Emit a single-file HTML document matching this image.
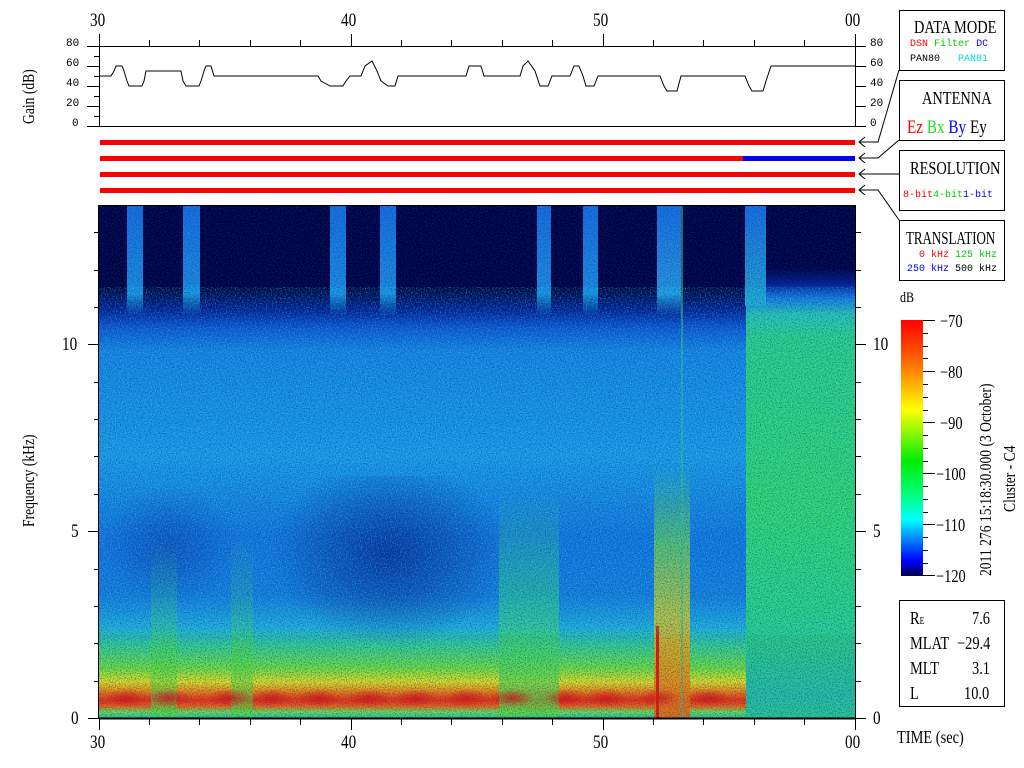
<!DOCTYPE html>
<html><head><meta charset="utf-8"><style>
*{margin:0;padding:0;box-sizing:border-box}
body{width:1024px;height:768px;background:#fff;position:relative;overflow:hidden;font-family:"Liberation Serif",serif;color:#000}
.a{position:absolute}
.t{position:absolute;font-size:17px;transform:scaleX(.8);transform-origin:left top;white-space:nowrap}
.m{position:absolute;font-family:"Liberation Mono",monospace;font-size:11px;white-space:nowrap}
.box{position:absolute;border:1px solid #000;background:#fff}
.rl{position:absolute;left:100px;width:755px;height:5px;background:#f00}
</style></head><body>

<div class="t" style="left:90px;top:10px;font-size:19px">30</div>
<div class="t" style="left:341px;top:10px;font-size:19px">40</div>
<div class="t" style="left:593px;top:10px;font-size:19px">50</div>
<div class="t" style="left:845px;top:10px;font-size:19px">00</div>
<div class="t" style="left:90px;top:732px;font-size:19px">30</div>
<div class="t" style="left:341px;top:732px;font-size:19px">40</div>
<div class="t" style="left:593px;top:732px;font-size:19px">50</div>
<div class="t" style="left:845px;top:732px;font-size:19px">00</div>

<div class="t" style="left:19px;top:124px;transform:rotate(-90deg) scaleX(.8);transform-origin:left top">Gain (dB)</div>
<div class="m" style="left:66px;top:38px">80</div>
<div class="m" style="left:66px;top:58px">60</div>
<div class="m" style="left:66px;top:78px">40</div>
<div class="m" style="left:66px;top:98px">20</div>
<div class="m" style="left:72px;top:118px">0</div>
<div class="m" style="left:870px;top:38px">80</div>
<div class="m" style="left:870px;top:58px">60</div>
<div class="m" style="left:870px;top:78px">40</div>
<div class="m" style="left:870px;top:98px">20</div>
<div class="m" style="left:870px;top:118px">0</div>

<div class="t" style="left:19px;top:527px;transform:rotate(-90deg) scaleX(.8);transform-origin:left top">Frequency (kHz)</div>
<div class="t" style="left:62px;top:334px;font-size:19px">10</div>
<div class="t" style="left:71px;top:521px;font-size:19px">5</div>
<div class="t" style="left:71px;top:708px;font-size:19px">0</div>
<div class="t" style="left:873px;top:334px;font-size:19px">10</div>
<div class="t" style="left:873px;top:521px;font-size:19px">5</div>
<div class="t" style="left:873px;top:708px;font-size:19px">0</div>

<div class="rl" style="top:140px"></div>
<div class="rl" style="top:156px"></div>
<div class="a" style="left:743px;top:156px;width:112px;height:5px;background:#0000ff"></div>
<div class="rl" style="top:172px"></div>
<div class="rl" style="top:188px"></div>

<div class="a" style="left:99px;top:206px;width:756px;height:512px;overflow:hidden;background:linear-gradient(#00003e 0px,#00003e 85px,#0a1a90 105px,#1450d0 122px,#1c80e2 145px,#2298e4 250px,#1a70dc 330px,#1c78dc 390px,#28a8d8 420px,#38d090 440px,#70e040 462px,#e0e020 476px,#f08010 486px,#f03010 494px,#f06010 500px,#70e050 506px,#30c0a0 512px)">
  <div class="a" style="left:170px;top:270px;width:240px;height:170px;background:radial-gradient(ellipse at 50% 45%,rgba(10,20,120,.7),rgba(10,30,140,0) 70%)"></div>
  <div class="a" style="left:0px;top:280px;width:140px;height:120px;background:radial-gradient(ellipse,rgba(15,40,160,.5),rgba(15,40,160,0) 70%)"></div>
  <div class="a" style="left:52px;top:330px;width:26px;height:180px;background:linear-gradient(rgba(60,210,120,0),rgba(80,220,60,.6))"></div>
  <div class="a" style="left:132px;top:330px;width:22px;height:180px;background:linear-gradient(rgba(60,210,120,0),rgba(80,220,60,.6))"></div>
  <div class="a" style="left:400px;top:280px;width:60px;height:230px;background:linear-gradient(rgba(40,200,160,0),rgba(60,210,120,.6) 50%,rgba(90,220,60,.7))"></div>
  <div class="a" style="left:555px;top:260px;width:36px;height:252px;background:linear-gradient(rgba(50,200,120,0),rgba(120,220,60,.7) 30%,rgba(230,200,20,.85) 60%,rgba(240,100,10,.9))"></div>
  <div class="a" style="left:557px;top:420px;width:3px;height:92px;background:#e02010"></div>
  <div class="a" style="left:28px;top:0;width:16px;height:110px;background:linear-gradient(#1a70e0,#2090e0 80%,rgba(30,120,230,0))"></div>
  <div class="a" style="left:84px;top:0;width:17px;height:110px;background:linear-gradient(#1a70e0,#2090e0 80%,rgba(30,120,230,0))"></div>
  <div class="a" style="left:231px;top:0;width:16px;height:110px;background:linear-gradient(#1a70e0,#2090e0 80%,rgba(30,120,230,0))"></div>
  <div class="a" style="left:281px;top:0;width:16px;height:110px;background:linear-gradient(#1a70e0,#2090e0 80%,rgba(30,120,230,0))"></div>
  <div class="a" style="left:438px;top:0;width:14px;height:110px;background:linear-gradient(#1a70e0,#2090e0 80%,rgba(30,120,230,0))"></div>
  <div class="a" style="left:484px;top:0;width:15px;height:110px;background:linear-gradient(#1a70e0,#2090e0 80%,rgba(30,120,230,0))"></div>
  <div class="a" style="left:558px;top:0;width:24px;height:110px;background:linear-gradient(#1a70e0,#2a9ae0 80%,rgba(30,120,230,0))"></div>
  <div class="a" style="left:582px;top:0;width:2px;height:512px;background:#40c080;opacity:.6"></div>
  <div class="a" style="left:0;top:478px;width:650px;height:30px;background:
   radial-gradient(ellipse 22px 9px at 27px 14px,rgba(230,20,10,.8),rgba(230,20,10,0)),
   radial-gradient(ellipse 22px 9px at 70px 14px,rgba(230,20,10,.8),rgba(230,20,10,0)),
   radial-gradient(ellipse 22px 9px at 130px 14px,rgba(230,20,10,.8),rgba(230,20,10,0)),
   radial-gradient(ellipse 22px 9px at 173px 14px,rgba(230,20,10,.8),rgba(230,20,10,0)),
   radial-gradient(ellipse 22px 9px at 220px 14px,rgba(230,20,10,.8),rgba(230,20,10,0)),
   radial-gradient(ellipse 22px 9px at 270px 14px,rgba(230,20,10,.8),rgba(230,20,10,0)),
   radial-gradient(ellipse 22px 9px at 317px 14px,rgba(230,20,10,.8),rgba(230,20,10,0)),
   radial-gradient(ellipse 22px 9px at 367px 14px,rgba(230,20,10,.8),rgba(230,20,10,0)),
   radial-gradient(ellipse 22px 9px at 413px 14px,rgba(230,20,10,.8),rgba(230,20,10,0)),
   radial-gradient(ellipse 22px 9px at 467px 14px,rgba(230,20,10,.8),rgba(230,20,10,0)),
   radial-gradient(ellipse 22px 9px at 507px 14px,rgba(230,20,10,.8),rgba(230,20,10,0)),
   radial-gradient(ellipse 22px 9px at 560px 14px,rgba(230,20,10,.8),rgba(230,20,10,0)),
   radial-gradient(ellipse 22px 9px at 610px 14px,rgba(230,20,10,.8),rgba(230,20,10,0))"></div>
  <div class="a" style="left:647px;top:0;width:109px;height:512px;background:linear-gradient(#00003e 0,#00003e 62px,#0a1a90 78px,#1e70e0 92px,#30c0b0 108px,#34d080 130px,#3ad864 300px,#30d080 420px,#28c0a0 490px,#30c890 512px)"></div>
  <div class="a" style="left:646px;top:0;width:21px;height:100px;background:linear-gradient(#1a70e0,#28a8d0)"></div>
  <svg class="a" style="left:0;top:0;opacity:.55" width="756" height="512"><filter id="n"><feTurbulence type="fractalNoise" baseFrequency="0.8" numOctaves="1" seed="3"/><feColorMatrix values="0 0 0 0 0  0 0 0 0 0.05  0 0 0 0 0.35  0 0 0 -3 1.7"/></filter><rect width="756" height="512" filter="url(#n)"/></svg>
  <svg class="a" style="left:0;top:0;opacity:.45" width="756" height="512"><filter id="n2"><feTurbulence type="fractalNoise" baseFrequency="0.8" numOctaves="1" seed="9"/><feColorMatrix values="0 0 0 0 0  0 0 0 0 1  0 0 0 0 1  0 0 0 -3 1.6"/></filter><rect width="756" height="290" y="110" filter="url(#n2)"/></svg>
</div>

<svg class="a" style="left:0;top:0" width="1024" height="768">
 <g stroke="#000" stroke-width="1" fill="none">
  <rect x="99.5" y="46.5" width="756" height="80"/>
  <line x1="87" y1="46.5" x2="99" y2="46.5"/><line x1="87" y1="66.5" x2="99" y2="66.5"/><line x1="87" y1="86.5" x2="99" y2="86.5"/><line x1="87" y1="106.5" x2="99" y2="106.5"/><line x1="87" y1="126.5" x2="99" y2="126.5"/>
  <line x1="94" y1="56.5" x2="99" y2="56.5"/><line x1="94" y1="76.5" x2="99" y2="76.5"/><line x1="94" y1="96.5" x2="99" y2="96.5"/><line x1="94" y1="116.5" x2="99" y2="116.5"/>
  <line x1="856" y1="46.5" x2="866" y2="46.5"/><line x1="856" y1="66.5" x2="866" y2="66.5"/><line x1="856" y1="86.5" x2="866" y2="86.5"/><line x1="856" y1="106.5" x2="866" y2="106.5"/><line x1="856" y1="126.5" x2="866" y2="126.5"/>
  <rect x="98.5" y="205.5" width="757" height="513"/>
  <line x1="99" y1="718.5" x2="855" y2="718.5" stroke-width="2"/>
  <path d="M88 718.5H99M88 531.5H99M88 344.5H99M94 681.5H99M94 643.5H99M94 606.5H99M94 569.5H99M94 494.5H99M94 456.5H99M94 419.5H99M94 382.5H99M94 307.5H99M94 270.5H99M94 232.5H99"/>
  <path d="M856 718.5H866M856 531.5H866M856 344.5H866M856 681.5H861M856 643.5H861M856 606.5H861M856 569.5H861M856 494.5H861M856 456.5H861M856 419.5H861M856 382.5H861M856 307.5H861M856 270.5H861M856 232.5H861"/>
  <path d="M99.5 34V46M149.5 40V46M199.5 40V46M250.5 40V46M300.5 40V46M351.5 34V46M401.5 40V46M451.5 40V46M502.5 40V46M552.5 40V46M603.5 34V46M653.5 40V46M703.5 40V46M754.5 40V46M804.5 40V46M855.5 34V46"/>
  <path d="M99.5 719V730M149.5 719V725M199.5 719V725M250.5 719V725M300.5 719V725M351.5 719V730M401.5 719V725M451.5 719V725M502.5 719V725M552.5 719V725M603.5 719V730M653.5 719V725M703.5 719V725M754.5 719V725M804.5 719V725M855.5 719V730"/>
  <polyline points="100,76 111,76 114,71 116,66 122,66 124,71 127,81 129,86 142,86 144,81 146,71 181,71 183,81 186,86 199,86 201,81 204,71 206,66 211,66 214,76 318,76 321,81 330,86 343,86 346,81 350,76 361,76 365,66 372,61 377,71 381,81 388,86 395,86 398,76 466,76 469,66 481,66 484,76 520,76 523,66 528,61 535,71 540,86 548,86 552,76 570,76 574,66 579,66 583,76 586,86 594,86 598,76 660,76 664,86 667,91 677,91 681,76 745,76 749,86 752,91 763,91 766,81 771,66 855,66"/>
  <path d="M899 70L878 142H860M865 137L859 142L865 147"/>
  <path d="M899 140L878 158H860M865 153L859 158L865 163"/>
  <path d="M899 174H860M865 169L859 174L865 179"/>
  <path d="M899 220L878 190H860M865 185L859 190L865 195"/>
  <path d="M923 320.5H935M923 371.5H935M923 422.5H935M923 473.5H935M923 524.5H935M923 575.5H935M923 333.5H928M923 346.5H928M923 358.5H928M923 384.5H928M923 397.5H928M923 410.5H928M923 435.5H928M923 448.5H928M923 461.5H928M923 486.5H928M923 499.5H928M923 512.5H928M923 537.5H928M923 550.5H928M923 563.5H928"/>
 </g>
</svg>

<div class="box" style="left:899px;top:10px;width:106px;height:61px">
 <div class="t" style="left:14px;top:6px;font-size:18px">DATA MODE</div>
 <div class="m" style="left:10px;top:28px;font-size:10px"><span style="color:#f00">DSN</span> <span style="color:#0c0">Filter</span> <span style="color:#00f">DC</span></div>
 <div class="m" style="left:10px;top:43px;font-size:10px">PAN80&nbsp;&nbsp;&nbsp;<span style="color:#0dd">PAN81</span></div>
</div>
<div class="box" style="left:899px;top:80px;width:106px;height:61px">
 <div class="t" style="left:22px;top:7px;font-size:18px">ANTENNA</div>
 <div class="t" style="left:7px;top:36px;font-size:19px"><span style="color:#f00">Ez</span> <span style="color:#2d2">Bx</span> <span style="color:#00f">By</span> Ey</div>
</div>
<div class="box" style="left:899px;top:150px;width:106px;height:61px">
 <div class="t" style="left:10px;top:7px;font-size:18px">RESOLUTION</div>
 <div class="m" style="left:3px;top:39px;font-size:10px"><span style="color:#f00">8-bit</span><span style="color:#0c0">4-bit</span><span style="color:#00f">1-bit</span></div>
</div>
<div class="box" style="left:899px;top:220px;width:106px;height:61px">
 <div class="t" style="left:6px;top:7px;font-size:18px;transform:scaleX(.72)">TRANSLATION</div>
 <div class="m" style="left:19px;top:29px;font-size:10px"><span style="color:#f00">0 kHz</span> <span style="color:#0c0">125 kHz</span></div>
 <div class="m" style="left:7px;top:43px;font-size:10px"><span style="color:#00f">250 kHz</span> 500 kHz</div>
</div>

<div class="t" style="left:900px;top:290px;font-size:15px">dB</div>
<div class="a" style="left:901px;top:320px;width:22px;height:256px;background:linear-gradient(#ff0000,#ff6000 15%,#ffff00 35%,#00ee00 55%,#00ff90 70%,#00ffff 78%,#0080ff 86%,#0000ff 94%,#000050)"></div>
<div class="t" style="left:940px;top:311px;font-size:18px">−70</div>
<div class="t" style="left:940px;top:362px;font-size:18px">−80</div>
<div class="t" style="left:940px;top:413px;font-size:18px">−90</div>
<div class="t" style="left:936px;top:464px;font-size:18px">−100</div>
<div class="t" style="left:936px;top:515px;font-size:18px">−110</div>
<div class="t" style="left:936px;top:566px;font-size:18px">−120</div>
<div class="t" style="left:976px;top:576px;transform:rotate(-90deg) scaleX(.8);transform-origin:left top">2011 276 15:18:30.000 (3 October)</div>
<div class="t" style="left:1000px;top:512px;transform:rotate(-90deg) scaleX(.8);transform-origin:left top">Cluster - C4</div>

<div class="box" style="left:899px;top:600px;width:106px;height:107px">
 <div class="t" style="left:10px;top:7px;font-size:18px">R<span style="font-size:10px">E</span></div><div class="t" style="left:72px;top:7px;font-size:18px">7.6</div>
 <div class="t" style="left:10px;top:32px;font-size:18px">MLAT</div><div class="t" style="left:57px;top:32px;font-size:18px">−29.4</div>
 <div class="t" style="left:10px;top:57px;font-size:18px">MLT</div><div class="t" style="left:72px;top:57px;font-size:18px">3.1</div>
 <div class="t" style="left:10px;top:82px;font-size:18px">L</div><div class="t" style="left:64px;top:82px;font-size:18px">10.0</div>
</div>
<div class="t" style="left:897px;top:727px;font-size:18px">TIME (sec)</div>
</body></html>
